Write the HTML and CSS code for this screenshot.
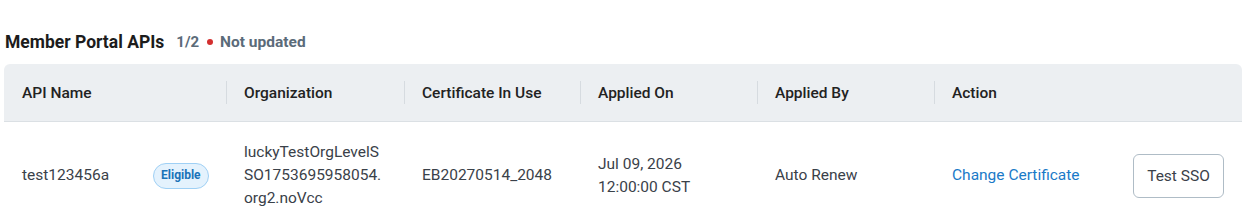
FILE: index.html
```html
<!DOCTYPE html>
<html>
<head>
<meta charset="utf-8">
<link rel="stylesheet" href="styles.css">
</head>
<body>
<div class="wrap">
  <div class="title-row">
    <h2 class="title">Member Portal APIs</h2>
    <span class="count">1/2</span>
    <span class="dot"></span>
    <span class="status">Not updated</span>
  </div>
  <table class="grid">
    <colgroup>
      <col class="c1"><col class="c2"><col class="c3"><col class="c4"><col class="c5"><col class="c6">
    </colgroup>
    <thead>
      <tr>
        <th><span class="th-in">API Name</span></th>
        <th class="sep"><span class="th-in">Organization</span></th>
        <th class="sep"><span class="th-in">Certificate In Use</span></th>
        <th class="sep"><span class="th-in">Applied On</span></th>
        <th class="sep"><span class="th-in">Applied By</span></th>
        <th class="sep"><span class="th-in">Action</span></th>
      </tr>
    </thead>
    <tbody>
      <tr>
        <td><div class="name-cell"><span>test123456a</span><span class="badge">Eligible</span></div></td>
        <td class="org">luckyTestOrgLevelSSO1753695958054.org2.noVcc</td>
        <td>EB20270514_2048</td>
        <td>Jul 09, 2026<br>12:00:00 CST</td>
        <td>Auto Renew</td>
        <td><div class="action-cell"><a class="link">Change Certificate</a><button class="btn">Test SSO</button></div></td>
      </tr>
    </tbody>
  </table>
</div>
</body>
</html>
```
FILE: styles.css
```css
* { box-sizing: border-box; }
body {
  margin: 0;
  font-family: Roboto, "Liberation Sans", Arial, sans-serif;
  color: #3a4149;
  background: #fff;
}
.wrap { padding: 31px 5px 0 4px; }
.title-row {
  display: flex;
  align-items: center;
  height: 22px;
  padding-left: 1px;
  margin-bottom: 11px;
}
.title {
  margin: 0;
  font-size: 17.5px;
  font-weight: 700;
  color: #1c1c1c;
  line-height: 22px;
}
.count {
  margin-left: 12px;
  font-size: 15px;
  font-weight: 700;
  color: #5b6b79;
}
.dot {
  width: 6px;
  height: 6px;
  border-radius: 50%;
  background: #d32f2f;
  margin: 0 7px 0 8px;
}
.status {
  font-size: 15.5px;
  font-weight: 700;
  color: #5b6b79;
}
.grid {
  width: 1238px;
  border-collapse: separate;
  border-spacing: 0;
  table-layout: fixed;
}
.c1 { width: 222px; }
.c2 { width: 178px; }
.c3 { width: 176px; }
.c4 { width: 177px; }
.c5 { width: 177px; }
.c6 { width: 308px; }
thead th {
  background: #eceff2;
  height: 58px;
  padding: 0 18px;
  text-align: left;
  font-size: 15.5px;
  font-weight: 500;
  color: #222;
  border-bottom: 1px solid #dbe0e4;
  position: relative;
}
thead th:first-child { border-top-left-radius: 6px; }
thead th:last-child { border-top-right-radius: 6px; }
thead th.sep::before {
  content: "";
  position: absolute;
  left: 0;
  top: 17px;
  height: 23px;
  width: 1px;
  background: #d6dbe0;
}
tbody td {
  padding: 19px 18px 17px;
  font-size: 15.5px;
  line-height: 23px;
  color: #3a4149;
  vertical-align: middle;
}
.org { overflow-wrap: anywhere; }
.name-cell {
  display: flex;
  align-items: center;
}
.badge {
  margin-left: 44px;
  height: 26px;
  padding: 0 7px;
  display: inline-flex;
  align-items: center;
  border: 1px solid #9fd0f5;
  background: #e4f2fd;
  color: #1a73b8;
  font-size: 12px;
  font-weight: 700;
  border-radius: 13px;
}
.action-cell {
  display: flex;
  align-items: center;
  justify-content: space-between;
}
.link {
  color: #1a7ac8;
  font-size: 15.5px;
  cursor: pointer;
}
.btn {
  width: 91px;
  height: 44px;
  border: 1px solid #afbcc6;
  background: #fff;
  border-radius: 6px;
  font-family: Roboto, "Liberation Sans", Arial, sans-serif;
  font-size: 15.5px;
  color: #3a4149;
}
```
